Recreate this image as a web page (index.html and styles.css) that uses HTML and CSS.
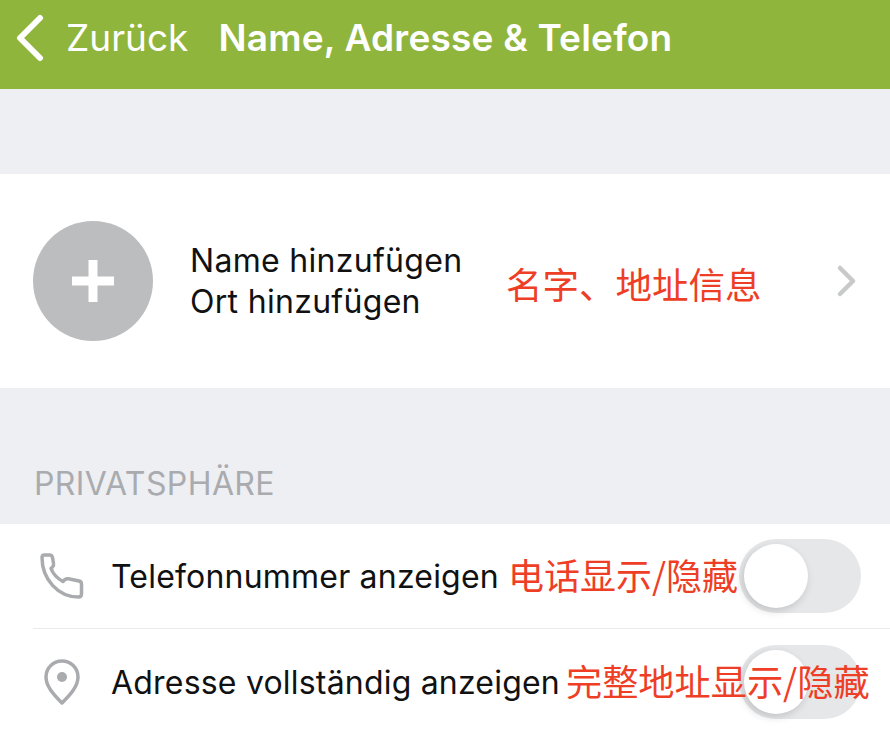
FILE: index.html
```html
<!DOCTYPE html>
<html lang="de">
<head>
  <meta charset="UTF-8" />
  <title>Name, Adresse &amp; Telefon</title>
  <link rel="stylesheet" href="styles.css">
</head>
<body>
  <div class="navbar">
    <svg class="back-icon" width="30" height="48" viewBox="0 0 30 48">
      <path d="M25 4 L5 24 L25 44" />
    </svg>
    <span class="back-label">Zurück</span>
    <span class="nav-title">Name, Adresse &amp; Telefon</span>
  </div>

  <div class="spacer-top"></div>

  <div class="profile">
    <div class="avatar">
      <svg width="44" height="44" viewBox="0 0 44 44">
        <path d="M17.5 1h9v16.5H43v9H26.500V43h-9V26.500H1v-9h16.500z" />
      </svg>
    </div>
    <div class="profile-text">
      <div>Name hinzufügen</div>
      <div>Ort hinzufügen</div>
    </div>
    <svg class="chevron" width="22" height="34" viewBox="0 0 22 34">
      <path d="M4 4 L17 17 L4 30" />
    </svg>
    <span class="note note-profile">名字、地址信息</span>
  </div>

  <div class="section-label">PRIVATSPHÄRE</div>

  <div class="list">
    <div class="row">
      <svg class="row-icon" width="48" height="48" viewBox="0 0 48 48">
        <path d="M4 5.500 Q4 3 6.500 3 H11.500 Q14 3 14.500 5.500 L15.500 11.500 Q16 13.500 14.500 15 L13 16.500 Q16 24.500 25 29.500 L27 27.500 Q28.500 26.500 30.500 26.800 L41 29 Q43.500 29.500 43.500 32 V42 Q43.500 45 40.500 45 C20 45 4 27 4 5.500 Z" />
      </svg>
      <span class="row-label">Telefonnummer anzeigen</span>
      <div class="toggle"><div class="knob"></div></div>
      <span class="note note-phone">电话显示/隐藏</span>
    </div>
    <div class="row">
      <svg class="row-icon" width="48" height="48" viewBox="0 0 48 48">
        <path d="M24 45 C15 36 8 28 8 19 C8 9.500 15.500 3 24 3 C32.500 3 40 9.500 40 19 C40 28 33 36 24 45 Z" />
        <circle class="pin-dot" cx="24" cy="19" r="5" />
      </svg>
      <span class="row-label">Adresse vollständig anzeigen</span>
      <div class="toggle"><div class="knob"></div></div>
      <span class="note note-address">完整地址显示/隐藏</span>
    </div>
  </div>
</body>
</html>
```

FILE: styles.css
```css
html, body { height: 100%; }
body { margin: 0; height: 730px; overflow: hidden; background: #eeeff3; color: #111; font-family: Inter, "Noto Sans CJK SC", sans-serif; }

.navbar { height: 89px; background: #8fb53d; color: #fff; display: flex; align-items: center; padding-left: 15px; box-sizing: border-box; padding-bottom: 15px; }
.back-icon { flex: none; margin-top: 1px; }
.back-icon path { fill: none; stroke: #fff; stroke-width: 6; stroke-linecap: round; stroke-linejoin: round; }
.back-label { font-size: 37px; margin-left: 21px; }
.nav-title { font-size: 37px; font-weight: 600; margin-left: 30px; letter-spacing: 0.2px; }

.spacer-top { height: 85px; }

.profile { position: relative; height: 214px; background: #fff; display: flex; align-items: center; padding: 0 33px; box-sizing: border-box; }
.avatar { width: 120px; height: 120px; border-radius: 50%; background: #bcbdbf; display: flex; align-items: center; justify-content: center; flex: none; }
.avatar svg { margin-top: -1px; }
.avatar path { fill: #fff; }
.profile-text { margin-left: 37px; font-size: 32px; line-height: 41px; letter-spacing: 0.3px; }
.chevron { margin-left: auto; margin-right: -1px; }
.chevron path { fill: none; stroke: #c8c9cb; stroke-width: 4.500; stroke-linecap: round; stroke-linejoin: round; }

.section-label { height: 136px; box-sizing: border-box; padding: 76px 0 0 34px; font-size: 32px; line-height: 40px; letter-spacing: 0.4px; color: #a9abae; }

.list { background: #fff; padding-left: 33px; }
.row { position: relative; height: 105px; display: flex; align-items: center; padding-right: 29px; box-sizing: border-box; border-bottom: 1px solid #e9eaec; }
.row:last-child { border-bottom: none; height: 106px; }
.row-icon { flex: none; margin-left: 5px; }
.row-icon path { fill: none; stroke: #a9abae; stroke-width: 3.500; stroke-linejoin: round; }
.pin-dot { fill: #a9abae; }
.row-label { margin-left: 25px; font-size: 32px; letter-spacing: 0.2px; }
.toggle { position: relative; margin-left: auto; width: 122px; height: 74px; border-radius: 37px; background: #e6e7e9; flex: none; }
.knob { position: absolute; left: 5px; top: 5px; width: 64px; height: 64px; border-radius: 50%; background: #fff; box-shadow: -2px 3px 8px rgba(0, 0, 0, 0.16); }

.note { position: absolute; color: #ee3e26; font-family: "Noto Sans CJK SC", sans-serif; white-space: nowrap; }
.note-profile { left: 506px; top: 85px; font-size: 36.500px; line-height: 50px; }
.note-phone { left: 475px; top: 26px; font-size: 36px; line-height: 48px; }
.note-address { left: 533px; top: 27px; font-size: 36.200px; line-height: 48px; }
```
